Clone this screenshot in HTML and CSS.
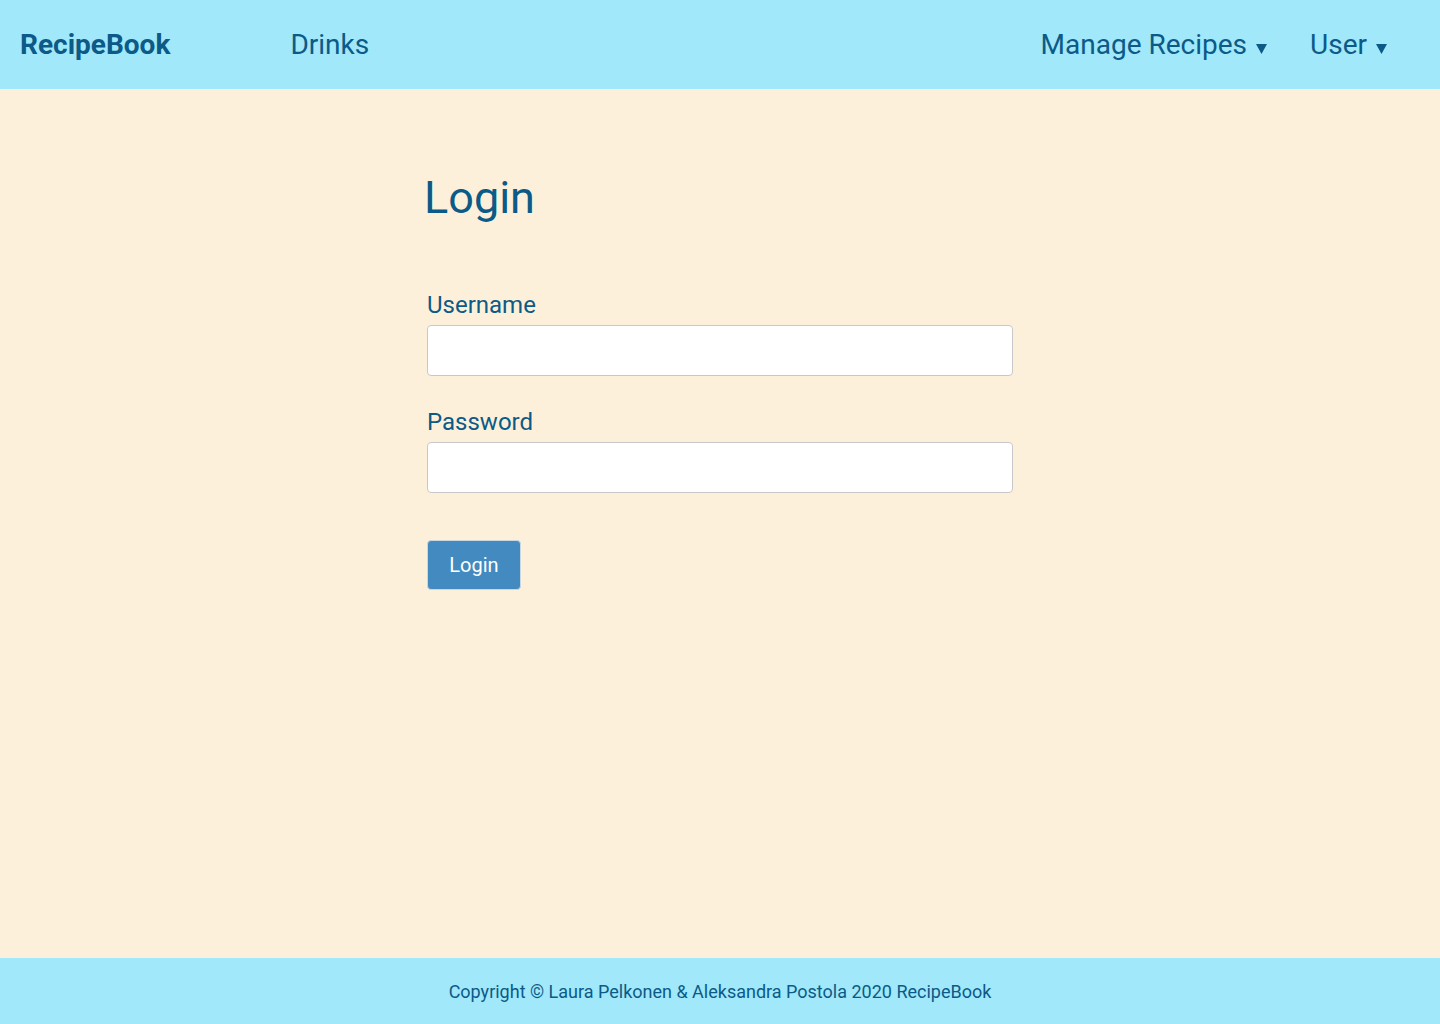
FILE: index.html
```html
<!DOCTYPE html>
<html lang="en">
<head>
<meta charset="utf-8">
<title>RecipeBook – Login</title>
<link rel="stylesheet" href="styles.css">
</head>
<body>
<header class="topbar">
  <nav class="nav-left">
    <a class="brand" href="#">RecipeBook</a>
    <a class="nav-link" href="#">Drinks</a>
  </nav>
  <nav class="nav-right">
    <a class="nav-link dropdown" href="#">Manage Recipes<svg class="caret" viewBox="0 0 11 10" width="11" height="10"><path d="M0 0H11L5.5 10Z" fill="currentColor"/></svg></a>
    <a class="nav-link dropdown" href="#">User<svg class="caret" viewBox="0 0 11 10" width="11" height="10"><path d="M0 0H11L5.5 10Z" fill="currentColor"/></svg></a>
  </nav>
</header>
<main class="content">
  <section class="login">
    <h1 class="title">Login</h1>
    <form class="form">
      <label class="field">
        <span class="label">Username</span>
        <input class="input" type="text">
      </label>
      <label class="field">
        <span class="label">Password</span>
        <input class="input" type="password">
      </label>
      <button class="btn" type="button">Login</button>
    </form>
  </section>
</main>
<footer class="footer">Copyright © Laura Pelkonen &amp; Aleksandra Postola 2020 RecipeBook</footer>
</body>
</html>
```
FILE: styles.css
```css
* { box-sizing: border-box; }
html, body { margin: 0; padding: 0; }
body {
  font-family: Roboto, "Liberation Sans", sans-serif;
  color: #0c5a87;
  background: #fdf0da;
  min-height: 100vh;
  display: flex;
  flex-direction: column;
}
.topbar {
  height: 89px;
  background: #a0e8fa;
  display: flex;
  align-items: center;
  justify-content: space-between;
  padding: 0 53px 0 20px;
}
.nav-left, .nav-right { display: flex; align-items: center; }
.brand {
  color: #0c5a87;
  text-decoration: none;
  font-weight: 700;
  font-size: 28px;
  margin-top: -1px;
}
.nav-link {
  color: #0c5a87;
  text-decoration: none;
  font-size: 28px;
}
.nav-left .nav-link { margin-left: 120px; margin-top: -1px; }
.nav-right .nav-link + .nav-link { margin-left: 43px; }
.caret { margin-left: 9px; vertical-align: 0; }
.content { flex: 1; }
.login {
  width: 586px;
  margin: 0 auto;
  padding-top: 81px;
}
.title {
  margin: 0 0 0 -3px;
  font-size: 45px;
  font-weight: 400;
  line-height: 56px;
}
.form { margin-top: 65px; display: flex; flex-direction: column; align-items: flex-start; }
.field { display: flex; flex-direction: column; width: 100%; margin-bottom: 32px; }
.label { font-size: 24px; line-height: 28px; margin-bottom: 6px; }
.input {
  width: 100%;
  height: 51px;
  border: 1px solid #c8c8cc;
  border-radius: 4px;
  background: #fff;
  font-size: 18px;
  padding: 0 12px;
}
.btn {
  margin-top: 15px;
  width: 94px;
  height: 50px;
  background: #438ac0;
  color: #fff;
  border: 1px solid #c9d7e0;
  border-radius: 4px;
  font-family: inherit;
  font-size: 20px;
}
.footer {
  height: 66px;
  background: #a0e8fa;
  display: flex;
  align-items: center;
  justify-content: center;
  font-size: 18px;
}
```
